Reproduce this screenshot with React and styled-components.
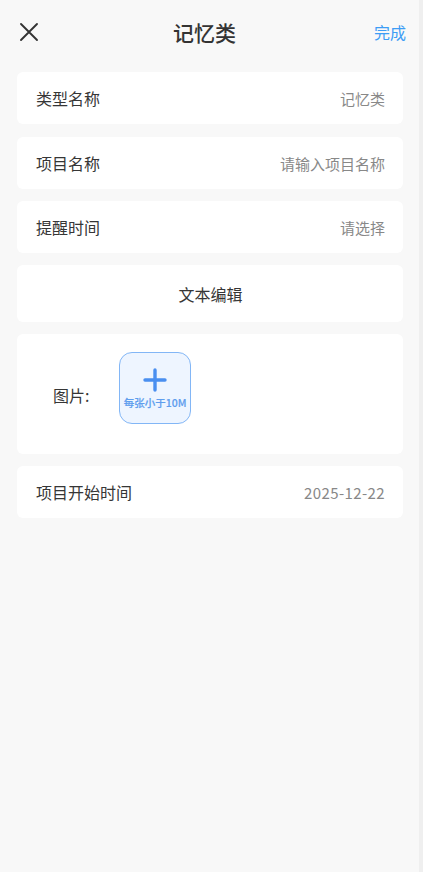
import styled, { createGlobalStyle } from "styled-components";

const GlobalStyle = createGlobalStyle`
  html, body {
    margin: 0;
    padding: 0;
    background: #f7f7f7;
  }
  body {
    font-family: "Noto Sans CJK SC", "Noto Sans", sans-serif;
  }
`;

export default function App() {
  return (
    <Page>
      <GlobalStyle />
      <Header>
        <CloseBtn>
          <svg width="20" height="20" viewBox="0 0 20 20">
            <path
              d="M2 2 L18 18 M18 2 L2 18"
              stroke="#333"
              strokeWidth="1.9"
              strokeLinecap="round"
            />
          </svg>
        </CloseBtn>
        <Title>记忆类</Title>
        <Done>完成</Done>
      </Header>

      <List>
        <Card first>
          <Label>类型名称</Label>
          <Value>记忆类</Value>
        </Card>
        <Card>
          <Label>项目名称</Label>
          <Value>请输入项目名称</Value>
        </Card>
        <Card>
          <Label>提醒时间</Label>
          <Value>请选择</Value>
        </Card>
        <Card center tall>
          <Label>文本编辑</Label>
        </Card>
        <ImageCard>
          <ImageLabel>图片:</ImageLabel>
          <Upload>
            <svg width="26" height="26" viewBox="0 0 26 26">
              <path
                d="M13 3 V23 M3 13 H23"
                stroke="#4a8ff0"
                strokeWidth="3.4"
                strokeLinecap="round"
              />
            </svg>
            <UploadHint>每张小于10M</UploadHint>
          </Upload>
        </ImageCard>
        <Card>
          <Label>项目开始时间</Label>
          <Value wide>2025-12-22</Value>
        </Card>
      </List>
    </Page>
  );
}

const Page = styled.div`
  min-height: 872px;
  box-sizing: border-box;
  border-right: 4px solid #efefef;
  background: #f8f8f8;
`;

const Header = styled.div`
  height: 64px;
  display: flex;
  align-items: center;
  justify-content: space-between;
  padding: 0 13px 0 19px;
  position: relative;
`;

const CloseBtn = styled.div`
  width: 20px;
  height: 20px;
  display: flex;
  margin-top: -1px;
`;

const Title = styled.div`
  position: absolute;
  left: 0;
  right: 10px;
  text-align: center;
  font-size: 21px;
  font-weight: 500;
  color: #333;
  pointer-events: none;
`;

const Done = styled.div`
  font-size: 16px;
  color: #3d9df5;
`;

const List = styled.div`
  display: flex;
  flex-direction: column;
  gap: 12px;
  padding: 8px 16px 0 17px;
`;

const Card = styled.div`
  height: ${(p) => (p.tall ? "57px" : "52px")};
  margin-bottom: ${(p) => (p.first ? "1px" : "0")};
  background: #fff;
  border-radius: 6px;
  display: flex;
  align-items: center;
  justify-content: ${(p) => (p.center ? "center" : "space-between")};
  padding: 0 18px 0 19px;
`;

const Label = styled.div`
  font-size: 16px;
  color: #363636;
`;

const Value = styled.div`
  font-size: 15px;
  color: #888;
  letter-spacing: ${(p) => (p.wide ? "0.4px" : "0")};
`;

const ImageCard = styled.div`
  height: 120px;
  background: #fff;
  border-radius: 6px;
  display: flex;
  align-items: flex-start;
  padding: 18px 0 0 36px;
  box-sizing: border-box;
`;

const ImageLabel = styled.div`
  font-size: 16px;
  color: #363636;
  width: 66px;
  margin-top: 31px;
`;

const Upload = styled.div`
  width: 72px;
  height: 72px;
  box-sizing: border-box;
  border: 1.5px solid #82b6f6;
  border-radius: 13px;
  background: #eef5ff;
  display: flex;
  flex-direction: column;
  align-items: center;
  padding-top: 14px;
  gap: 2px;
`;

const UploadHint = styled.div`
  font-size: 10.5px;
  font-weight: 500;
  color: #5f9eee;
  white-space: nowrap;
  -webkit-text-stroke: 0.2px #5f9eee;
`;
